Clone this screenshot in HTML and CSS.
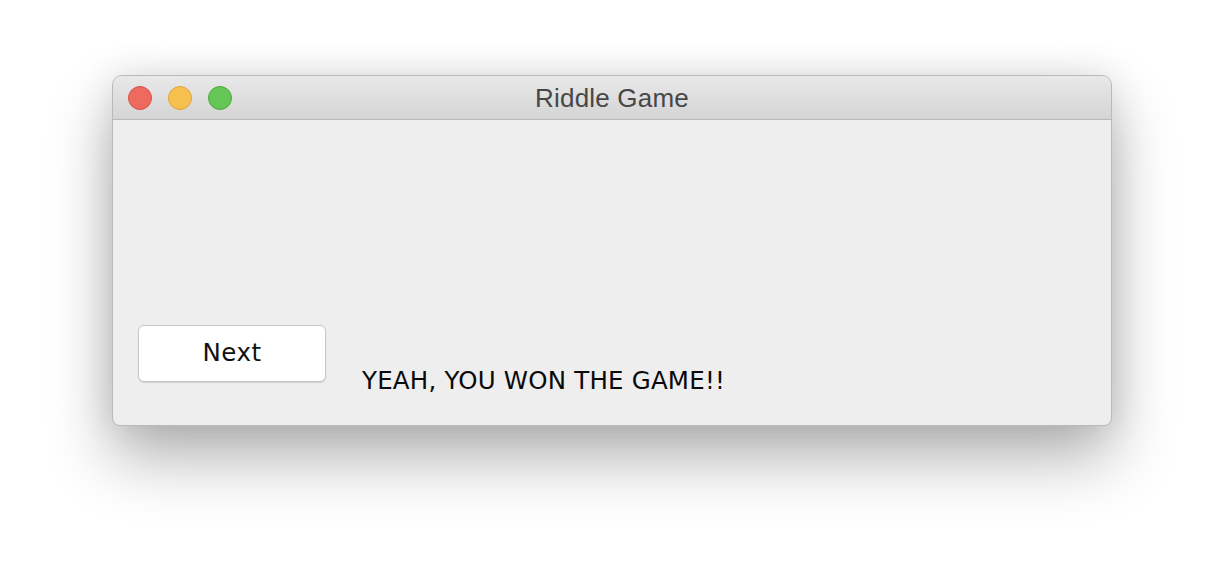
FILE: index.html
```html
<!DOCTYPE html>
<html>
<head>
<meta charset="utf-8">
<link rel="stylesheet" href="styles.css">
</head>
<body>
<div class="stage">
  <div class="window">
    <div class="titlebar">
      <div class="lights">
        <span class="light red"></span>
        <span class="light yellow"></span>
        <span class="light green"></span>
      </div>
      <div class="title">Riddle Game</div>
    </div>
    <div class="content">
      <div class="row">
        <button class="btn">Next</button>
        <div class="label">YEAH, YOU WON THE GAME!!</div>
      </div>
    </div>
  </div>
</div>
</body>
</html>
```

FILE: styles.css
```css
html, body {
  margin: 0;
  padding: 0;
  background: #ffffff;
}
.stage {
  width: 1224px;
  height: 574px;
  padding: 75px 0 0 112px;
  box-sizing: border-box;
  overflow: hidden;
}
.window {
  width: 1000px;
  height: 351px;
  box-sizing: border-box;
  border: 1px solid #b9b9b9;
  border-radius: 10px 10px 8px 8px;
  background: #eeeeee;
  display: flex;
  flex-direction: column;
  overflow: hidden;
  box-shadow: 0 32px 64px rgba(0,0,0,0.30), 0 0 36px rgba(0,0,0,0.10);
}
.titlebar {
  height: 44px;
  flex: none;
  box-sizing: border-box;
  border-bottom: 1px solid #b8b8b8;
  background: linear-gradient(#e9e9e9, #d4d4d4);
  display: flex;
  align-items: center;
  position: relative;
}
.lights {
  display: flex;
  gap: 16px;
  padding-left: 15px;
  padding-top: 1px;
}
.light {
  width: 24px;
  height: 24px;
  border-radius: 50%;
  box-sizing: border-box;
}
.red { background: #ee6a5e; border: 1px solid #d65248; }
.yellow { background: #f6c04f; border: 1px solid #dea53a; }
.green { background: #63c655; border: 1px solid #50a83e; }
.title {
  position: absolute;
  left: 0;
  right: 0;
  top: 0;
  bottom: 0;
  display: flex;
  align-items: center;
  justify-content: center;
  font-family: "Liberation Sans", Arial, sans-serif;
  font-size: 26px;
  letter-spacing: 0.2px;
  color: #474747;
  padding-top: 2px;
  pointer-events: none;
}
.content {
  flex: 1;
  display: flex;
  flex-direction: column;
  padding: 205px 0 0 25px;
}
.row {
  display: flex;
  align-items: flex-start;
}
.btn {
  width: 188px;
  height: 57px;
  background: #ffffff;
  border: 1px solid #c6c6c6;
  border-radius: 6px;
  box-shadow: 0 1px 1px rgba(0,0,0,0.12);
  font-family: "DejaVu Sans", sans-serif;
  font-size: 24.5px;
  letter-spacing: 0.5px;
  color: #111111;
  padding: 0 0 2px 0;
  margin: 0;
}
.label {
  margin-left: 36px;
  margin-top: 42px;
  font-family: "DejaVu Sans", sans-serif;
  font-size: 24.5px;
  letter-spacing: 0.2px;
  line-height: 28px;
  color: #0a0a0a;
}
```
